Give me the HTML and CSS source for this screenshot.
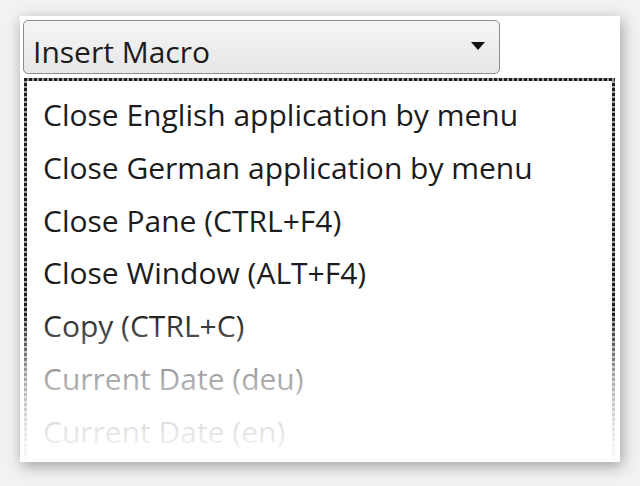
FILE: index.html
```html
<!DOCTYPE html>
<html>
<head>
<meta charset="utf-8">
<link rel="stylesheet" href="styles.css">
</head>
<body>
<div class="panel">
  <div class="combo">
    <span class="combo-text">Insert Macro</span>
    <span class="arrow"></span>
  </div>
  <div class="list">
    <div class="item">Close English application by menu</div>
    <div class="item">Close German application by menu</div>
    <div class="item">Close Pane (CTRL+F4)</div>
    <div class="item">Close Window (ALT+F4)</div>
    <div class="item">Copy (CTRL+C)</div>
    <div class="item">Current Date (deu)</div>
    <div class="item">Current Date (en)</div>
    <div class="fade"></div>
  </div>
</div>
</body>
</html>
```

FILE: styles.css
```css
html, body {
  margin: 0;
  padding: 0;
}
body {
  width: 640px;
  height: 486px;
  background: #f2f2f2;
  overflow: hidden;
  font-family: "Open Sans", "Noto Sans", sans-serif;
  color: #1c1c1c;
}
.panel {
  box-sizing: border-box;
  margin: 16px 0 0 20px;
  width: 600px;
  height: 446px;
  background: #ffffff;
  box-shadow: 2px 4px 14px rgba(0, 0, 0, 0.35);
  padding: 4px 0 0 3px;
  overflow: hidden;
}
.combo {
  box-sizing: border-box;
  width: 477px;
  height: 54px;
  border: 1.5px solid #8c8c8c;
  border-radius: 5px;
  background: linear-gradient(#f6f6f6, #e6e6e6);
  display: flex;
  align-items: center;
  justify-content: space-between;
  padding: 0 14px 0 9px;
}
.combo-text {
  font-size: 30px;
  line-height: 1;
  padding-top: 10px;
}
.arrow {
  width: 0;
  height: 0;
  border-left: 7px solid transparent;
  border-right: 7px solid transparent;
  border-top: 8px solid #111;
  margin-bottom: 2px;
}
.list {
  position: relative;
  box-sizing: border-box;
  margin: 4px 0 0 1px;
  width: 591px;
  height: 400px;
  padding: 11px 0 0 19px;
  background:
    repeating-linear-gradient(90deg, #1e1e1e 0 3px, #9a9a9a 3px 5px) top left / 100% 3px no-repeat,
    repeating-linear-gradient(90deg, #1e1e1e 0 3px, #9a9a9a 3px 5px) bottom left / 100% 3px no-repeat,
    repeating-linear-gradient(180deg, #1e1e1e 0 3px, #9a9a9a 3px 5px) top left / 3px 100% no-repeat,
    repeating-linear-gradient(180deg, #1e1e1e 0 3px, #9a9a9a 3px 5px) top right / 3px 100% no-repeat,
    #ffffff;
}
.item {
  height: 52.8px;
  line-height: 52.8px;
  font-size: 30px;
  white-space: nowrap;
}
.fade {
  position: absolute;
  left: -1px;
  right: -1px;
  top: 235px;
  bottom: -1px;
  background: linear-gradient(rgba(255,255,255,0) 0%, rgba(255,255,255,0.6) 38%, rgba(255,255,255,0.85) 65%, #ffffff 92%);
}
```
